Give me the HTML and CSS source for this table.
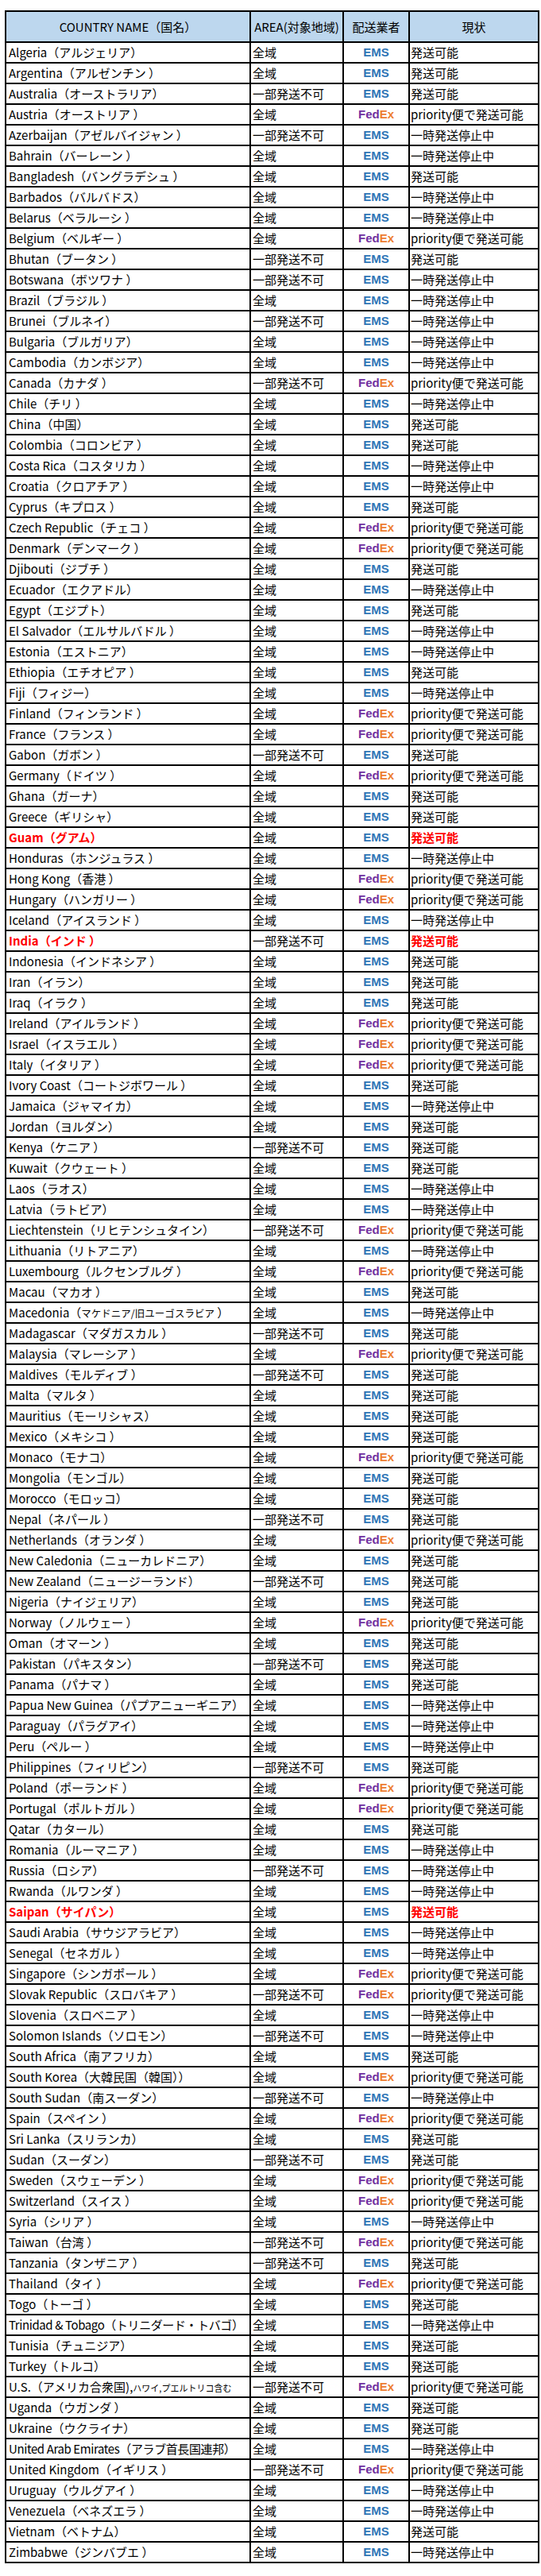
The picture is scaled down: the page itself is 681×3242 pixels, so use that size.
FILE: index.html
```html
<!DOCTYPE html>
<html lang="ja">
<head>
<meta charset="utf-8">
<title>配送可能国一覧</title>
<link rel="stylesheet" href="styles.css">
</head>
<body>
<div class="wrap">
<table class="ship">
<colgroup><col class="w1"><col class="w2"><col class="w3"><col class="w4"></colgroup>
<thead>
<tr><th>COUNTRY NAME（国名）</th><th>AREA(対象地域)</th><th>配送業者</th><th>現状</th></tr>
</thead>
<tbody>
<tr><td>Algeria（アルジェリア）</td><td>全域</td><td class="ems">EMS</td><td>発送可能</td></tr>
<tr><td>Argentina（アルゼンチン ）</td><td>全域</td><td class="ems">EMS</td><td>発送可能</td></tr>
<tr><td>Australia（オーストラリア）</td><td>一部発送不可</td><td class="ems">EMS</td><td>発送可能</td></tr>
<tr><td>Austria（オーストリア ）</td><td>全域</td><td class="fdx">Fed<span>Ex</span></td><td>priority便で発送可能</td></tr>
<tr><td>Azerbaijan（アゼルバイジャン ）</td><td>一部発送不可</td><td class="ems">EMS</td><td>一時発送停止中</td></tr>
<tr><td>Bahrain（バーレーン ）</td><td>全域</td><td class="ems">EMS</td><td>一時発送停止中</td></tr>
<tr><td>Bangladesh（バングラデシュ ）</td><td>全域</td><td class="ems">EMS</td><td>発送可能</td></tr>
<tr><td>Barbados（バルバドス）</td><td>全域</td><td class="ems">EMS</td><td>一時発送停止中</td></tr>
<tr><td>Belarus（ベラルーシ ）</td><td>全域</td><td class="ems">EMS</td><td>一時発送停止中</td></tr>
<tr><td>Belgium（ベルギー ）</td><td>全域</td><td class="fdx">Fed<span>Ex</span></td><td>priority便で発送可能</td></tr>
<tr><td>Bhutan（ブータン ）</td><td>一部発送不可</td><td class="ems">EMS</td><td>発送可能</td></tr>
<tr><td>Botswana（ボツワナ ）</td><td>一部発送不可</td><td class="ems">EMS</td><td>一時発送停止中</td></tr>
<tr><td>Brazil（ブラジル ）</td><td>全域</td><td class="ems">EMS</td><td>一時発送停止中</td></tr>
<tr><td>Brunei（ブルネイ）</td><td>一部発送不可</td><td class="ems">EMS</td><td>一時発送停止中</td></tr>
<tr><td>Bulgaria（ブルガリア）</td><td>全域</td><td class="ems">EMS</td><td>一時発送停止中</td></tr>
<tr><td>Cambodia（カンボジア）</td><td>全域</td><td class="ems">EMS</td><td>一時発送停止中</td></tr>
<tr><td>Canada（カナダ ）</td><td>一部発送不可</td><td class="fdx">Fed<span>Ex</span></td><td>priority便で発送可能</td></tr>
<tr><td>Chile（チリ ）</td><td>全域</td><td class="ems">EMS</td><td>一時発送停止中</td></tr>
<tr><td>China（中国）</td><td>全域</td><td class="ems">EMS</td><td>発送可能</td></tr>
<tr><td>Colombia（コロンビア ）</td><td>全域</td><td class="ems">EMS</td><td>発送可能</td></tr>
<tr><td>Costa Rica（コスタリカ ）</td><td>全域</td><td class="ems">EMS</td><td>一時発送停止中</td></tr>
<tr><td>Croatia（クロアチア ）</td><td>全域</td><td class="ems">EMS</td><td>一時発送停止中</td></tr>
<tr><td>Cyprus（キプロス ）</td><td>全域</td><td class="ems">EMS</td><td>発送可能</td></tr>
<tr><td>Czech Republic（チェコ ）</td><td>全域</td><td class="fdx">Fed<span>Ex</span></td><td>priority便で発送可能</td></tr>
<tr><td>Denmark（デンマーク ）</td><td>全域</td><td class="fdx">Fed<span>Ex</span></td><td>priority便で発送可能</td></tr>
<tr><td>Djibouti（ジブチ ）</td><td>全域</td><td class="ems">EMS</td><td>発送可能</td></tr>
<tr><td>Ecuador（エクアドル）</td><td>全域</td><td class="ems">EMS</td><td>一時発送停止中</td></tr>
<tr><td>Egypt（エジプト）</td><td>全域</td><td class="ems">EMS</td><td>発送可能</td></tr>
<tr><td>El Salvador（エルサルバドル ）</td><td>全域</td><td class="ems">EMS</td><td>一時発送停止中</td></tr>
<tr><td>Estonia（エストニア）</td><td>全域</td><td class="ems">EMS</td><td>一時発送停止中</td></tr>
<tr><td>Ethiopia（エチオピア ）</td><td>全域</td><td class="ems">EMS</td><td>発送可能</td></tr>
<tr><td>Fiji（フィジー）</td><td>全域</td><td class="ems">EMS</td><td>一時発送停止中</td></tr>
<tr><td>Finland（フィンランド ）</td><td>全域</td><td class="fdx">Fed<span>Ex</span></td><td>priority便で発送可能</td></tr>
<tr><td>France（フランス ）</td><td>全域</td><td class="fdx">Fed<span>Ex</span></td><td>priority便で発送可能</td></tr>
<tr><td>Gabon（ガボン ）</td><td>一部発送不可</td><td class="ems">EMS</td><td>発送可能</td></tr>
<tr><td>Germany（ドイツ ）</td><td>全域</td><td class="fdx">Fed<span>Ex</span></td><td>priority便で発送可能</td></tr>
<tr><td>Ghana（ガーナ）</td><td>全域</td><td class="ems">EMS</td><td>発送可能</td></tr>
<tr><td>Greece（ギリシャ）</td><td>全域</td><td class="ems">EMS</td><td>発送可能</td></tr>
<tr class="hot"><td>Guam（グアム）</td><td>全域</td><td class="ems">EMS</td><td>発送可能</td></tr>
<tr><td>Honduras（ホンジュラス ）</td><td>全域</td><td class="ems">EMS</td><td>一時発送停止中</td></tr>
<tr><td>Hong Kong（香港 ）</td><td>全域</td><td class="fdx">Fed<span>Ex</span></td><td>priority便で発送可能</td></tr>
<tr><td>Hungary（ハンガリー ）</td><td>全域</td><td class="fdx">Fed<span>Ex</span></td><td>priority便で発送可能</td></tr>
<tr><td>Iceland（アイスランド ）</td><td>全域</td><td class="ems">EMS</td><td>一時発送停止中</td></tr>
<tr class="hot"><td>India（インド ）</td><td>一部発送不可</td><td class="ems">EMS</td><td>発送可能</td></tr>
<tr><td>Indonesia（インドネシア ）</td><td>全域</td><td class="ems">EMS</td><td>発送可能</td></tr>
<tr><td>Iran（イラン）</td><td>全域</td><td class="ems">EMS</td><td>発送可能</td></tr>
<tr><td>Iraq（イラク ）</td><td>全域</td><td class="ems">EMS</td><td>発送可能</td></tr>
<tr><td>Ireland（アイルランド ）</td><td>全域</td><td class="fdx">Fed<span>Ex</span></td><td>priority便で発送可能</td></tr>
<tr><td>Israel（イスラエル ）</td><td>全域</td><td class="fdx">Fed<span>Ex</span></td><td>priority便で発送可能</td></tr>
<tr><td>Italy（イタリア ）</td><td>全域</td><td class="fdx">Fed<span>Ex</span></td><td>priority便で発送可能</td></tr>
<tr><td>Ivory Coast（コートジボワール ）</td><td>全域</td><td class="ems">EMS</td><td>発送可能</td></tr>
<tr><td>Jamaica（ジャマイカ）</td><td>全域</td><td class="ems">EMS</td><td>一時発送停止中</td></tr>
<tr><td>Jordan（ヨルダン）</td><td>全域</td><td class="ems">EMS</td><td>発送可能</td></tr>
<tr><td>Kenya（ケニア ）</td><td>一部発送不可</td><td class="ems">EMS</td><td>発送可能</td></tr>
<tr><td>Kuwait（クウェート ）</td><td>全域</td><td class="ems">EMS</td><td>発送可能</td></tr>
<tr><td>Laos（ラオス）</td><td>全域</td><td class="ems">EMS</td><td>一時発送停止中</td></tr>
<tr><td>Latvia（ラトビア）</td><td>全域</td><td class="ems">EMS</td><td>一時発送停止中</td></tr>
<tr><td>Liechtenstein（リヒテンシュタイン）</td><td>一部発送不可</td><td class="fdx">Fed<span>Ex</span></td><td>priority便で発送可能</td></tr>
<tr><td>Lithuania（リトアニア）</td><td>全域</td><td class="ems">EMS</td><td>一時発送停止中</td></tr>
<tr><td>Luxembourg（ルクセンブルグ ）</td><td>全域</td><td class="fdx">Fed<span>Ex</span></td><td>priority便で発送可能</td></tr>
<tr><td>Macau（マカオ ）</td><td>全域</td><td class="ems">EMS</td><td>発送可能</td></tr>
<tr><td>Macedonia（<span class="sm">マケドニア/旧ユーゴスラビア</span> ）</td><td>全域</td><td class="ems">EMS</td><td>一時発送停止中</td></tr>
<tr><td>Madagascar（マダガスカル ）</td><td>一部発送不可</td><td class="ems">EMS</td><td>発送可能</td></tr>
<tr><td>Malaysia（マレーシア ）</td><td>全域</td><td class="fdx">Fed<span>Ex</span></td><td>priority便で発送可能</td></tr>
<tr><td>Maldives（モルディブ ）</td><td>一部発送不可</td><td class="ems">EMS</td><td>発送可能</td></tr>
<tr><td>Malta（マルタ ）</td><td>全域</td><td class="ems">EMS</td><td>発送可能</td></tr>
<tr><td>Mauritius（モーリシャス）</td><td>全域</td><td class="ems">EMS</td><td>発送可能</td></tr>
<tr><td>Mexico（メキシコ ）</td><td>全域</td><td class="ems">EMS</td><td>発送可能</td></tr>
<tr><td>Monaco（モナコ）</td><td>全域</td><td class="fdx">Fed<span>Ex</span></td><td>priority便で発送可能</td></tr>
<tr><td>Mongolia（モンゴル）</td><td>全域</td><td class="ems">EMS</td><td>発送可能</td></tr>
<tr><td>Morocco（モロッコ）</td><td>全域</td><td class="ems">EMS</td><td>発送可能</td></tr>
<tr><td>Nepal（ネパール ）</td><td>一部発送不可</td><td class="ems">EMS</td><td>発送可能</td></tr>
<tr><td>Netherlands（オランダ ）</td><td>全域</td><td class="fdx">Fed<span>Ex</span></td><td>priority便で発送可能</td></tr>
<tr><td>New Caledonia（ニューカレドニア）</td><td>全域</td><td class="ems">EMS</td><td>発送可能</td></tr>
<tr><td>New Zealand（ニュージーランド）</td><td>一部発送不可</td><td class="ems">EMS</td><td>発送可能</td></tr>
<tr><td>Nigeria（ナイジェリア）</td><td>全域</td><td class="ems">EMS</td><td>発送可能</td></tr>
<tr><td>Norway（ノルウェー ）</td><td>全域</td><td class="fdx">Fed<span>Ex</span></td><td>priority便で発送可能</td></tr>
<tr><td>Oman（オマーン ）</td><td>全域</td><td class="ems">EMS</td><td>発送可能</td></tr>
<tr><td>Pakistan（パキスタン）</td><td>一部発送不可</td><td class="ems">EMS</td><td>発送可能</td></tr>
<tr><td>Panama（パナマ ）</td><td>全域</td><td class="ems">EMS</td><td>発送可能</td></tr>
<tr><td>Papua New Guinea（パプアニューギニア）</td><td>全域</td><td class="ems">EMS</td><td>一時発送停止中</td></tr>
<tr><td>Paraguay（パラグアイ）</td><td>全域</td><td class="ems">EMS</td><td>一時発送停止中</td></tr>
<tr><td>Peru（ペルー ）</td><td>全域</td><td class="ems">EMS</td><td>一時発送停止中</td></tr>
<tr><td>Philippines（フィリピン）</td><td>一部発送不可</td><td class="ems">EMS</td><td>発送可能</td></tr>
<tr><td>Poland（ポーランド ）</td><td>全域</td><td class="fdx">Fed<span>Ex</span></td><td>priority便で発送可能</td></tr>
<tr><td>Portugal（ポルトガル ）</td><td>全域</td><td class="fdx">Fed<span>Ex</span></td><td>priority便で発送可能</td></tr>
<tr><td>Qatar（カタール）</td><td>全域</td><td class="ems">EMS</td><td>発送可能</td></tr>
<tr><td>Romania（ルーマニア ）</td><td>全域</td><td class="ems">EMS</td><td>一時発送停止中</td></tr>
<tr><td>Russia（ロシア）</td><td>一部発送不可</td><td class="ems">EMS</td><td>一時発送停止中</td></tr>
<tr><td>Rwanda（ルワンダ ）</td><td>全域</td><td class="ems">EMS</td><td>一時発送停止中</td></tr>
<tr class="hot"><td>Saipan（サイパン）</td><td>全域</td><td class="ems">EMS</td><td>発送可能</td></tr>
<tr><td>Saudi Arabia（サウジアラビア）</td><td>全域</td><td class="ems">EMS</td><td>一時発送停止中</td></tr>
<tr><td>Senegal（セネガル ）</td><td>全域</td><td class="ems">EMS</td><td>一時発送停止中</td></tr>
<tr><td>Singapore（シンガポール ）</td><td>全域</td><td class="fdx">Fed<span>Ex</span></td><td>priority便で発送可能</td></tr>
<tr><td>Slovak Republic（スロバキア ）</td><td>一部発送不可</td><td class="fdx">Fed<span>Ex</span></td><td>priority便で発送可能</td></tr>
<tr><td>Slovenia（スロベニア ）</td><td>全域</td><td class="ems">EMS</td><td>一時発送停止中</td></tr>
<tr><td>Solomon Islands（ソロモン）</td><td>一部発送不可</td><td class="ems">EMS</td><td>一時発送停止中</td></tr>
<tr><td>South Africa（南アフリカ）</td><td>全域</td><td class="ems">EMS</td><td>発送可能</td></tr>
<tr><td>South Korea（大韓民国（韓国））</td><td>全域</td><td class="fdx">Fed<span>Ex</span></td><td>priority便で発送可能</td></tr>
<tr><td>South Sudan（南スーダン）</td><td>一部発送不可</td><td class="ems">EMS</td><td>一時発送停止中</td></tr>
<tr><td>Spain（スペイン ）</td><td>全域</td><td class="fdx">Fed<span>Ex</span></td><td>priority便で発送可能</td></tr>
<tr><td>Sri Lanka（スリランカ）</td><td>全域</td><td class="ems">EMS</td><td>発送可能</td></tr>
<tr><td>Sudan（スーダン）</td><td>一部発送不可</td><td class="ems">EMS</td><td>発送可能</td></tr>
<tr><td>Sweden（スウェーデン ）</td><td>全域</td><td class="fdx">Fed<span>Ex</span></td><td>priority便で発送可能</td></tr>
<tr><td>Switzerland（スイス ）</td><td>全域</td><td class="fdx">Fed<span>Ex</span></td><td>priority便で発送可能</td></tr>
<tr><td>Syria（シリア ）</td><td>全域</td><td class="ems">EMS</td><td>一時発送停止中</td></tr>
<tr><td>Taiwan（台湾 ）</td><td>一部発送不可</td><td class="fdx">Fed<span>Ex</span></td><td>priority便で発送可能</td></tr>
<tr><td>Tanzania（タンザニア ）</td><td>一部発送不可</td><td class="ems">EMS</td><td>発送可能</td></tr>
<tr><td>Thailand（タイ ）</td><td>全域</td><td class="fdx">Fed<span>Ex</span></td><td>priority便で発送可能</td></tr>
<tr><td>Togo（トーゴ ）</td><td>全域</td><td class="ems">EMS</td><td>発送可能</td></tr>
<tr><td class="tight">Trinidad &amp; Tobago（トリニダード・トバゴ）</td><td>全域</td><td class="ems">EMS</td><td>一時発送停止中</td></tr>
<tr><td>Tunisia（チュニジア）</td><td>全域</td><td class="ems">EMS</td><td>発送可能</td></tr>
<tr><td>Turkey（トルコ）</td><td>全域</td><td class="ems">EMS</td><td>発送可能</td></tr>
<tr><td>U.S.（アメリカ合衆国),<span class="xs">ハワイ,プエルトリコ含む</span></td><td>一部発送不可</td><td class="fdx">Fed<span>Ex</span></td><td>priority便で発送可能</td></tr>
<tr><td>Uganda（ウガンダ ）</td><td>全域</td><td class="ems">EMS</td><td>発送可能</td></tr>
<tr><td>Ukraine（ウクライナ）</td><td>全域</td><td class="ems">EMS</td><td>発送可能</td></tr>
<tr><td class="tight">United Arab Emirates（アラブ首長国連邦）</td><td>全域</td><td class="ems">EMS</td><td>一時発送停止中</td></tr>
<tr><td>United Kingdom（イギリス ）</td><td>一部発送不可</td><td class="fdx">Fed<span>Ex</span></td><td>priority便で発送可能</td></tr>
<tr><td>Uruguay（ウルグアイ ）</td><td>全域</td><td class="ems">EMS</td><td>一時発送停止中</td></tr>
<tr><td>Venezuela（ベネズエラ ）</td><td>全域</td><td class="ems">EMS</td><td>一時発送停止中</td></tr>
<tr><td>Vietnam（ベトナム）</td><td>全域</td><td class="ems">EMS</td><td>発送可能</td></tr>
<tr><td>Zimbabwe（ジンバブエ ）</td><td>全域</td><td class="ems">EMS</td><td>一時発送停止中</td></tr>
</tbody>
</table>
</div>
</body>
</html>
```
FILE: styles.css
```css
html, body {
  margin: 0;
  padding: 0;
  background: #fff;
}

body {
  font-family: "Noto Sans CJK JP", "Noto Sans", sans-serif;
  font-size: 15px;
  color: #000;
}

.wrap {
  padding: 13px 0 0 6px;
}

.ship {
  border-collapse: separate;
  border-spacing: 0;
  table-layout: fixed;
  width: 673px;
  box-sizing: border-box;
  border-top: 2px solid #000;
  border-left: 2px solid #000;
}

.w1 { width: 308px; }
.w2 { width: 117px; }
.w3 { width: 83px; }
.w4 { width: 163px; }

.ship th,
.ship td {
  border-right: 2px solid #000;
  border-bottom: 2px solid #000;
  padding: 0;
  white-space: nowrap;
  overflow: hidden;
  vertical-align: middle;
  line-height: 20px;
}

.ship th {
  height: 37px;
  background: #bdd7ee;
  font-weight: 400;
  text-align: center;
}

.ship td {
  height: 24px;
}

.ship td:nth-child(1) { padding-left: 3px; }
.ship td:nth-child(2) { padding-left: 2px; }
.ship td:nth-child(4) { padding-left: 1px; }

.ship td.tight { letter-spacing: -0.4px; }

.ship td.ems,
.ship td.fdx {
  text-align: center;
  font-family: "Liberation Sans", Arial, sans-serif;
  font-weight: 700;
  padding-left: 0;
}

.ems { color: #2e75b6; }
.fdx { color: #7030a0; }
.fdx span { color: #ed7d31; }

.hot td:nth-child(1),
.hot td:nth-child(4) {
  color: #ff0000;
  font-weight: 700;
}

.sm { font-size: 12.5px; }
.xs { font-size: 11px; }
```
